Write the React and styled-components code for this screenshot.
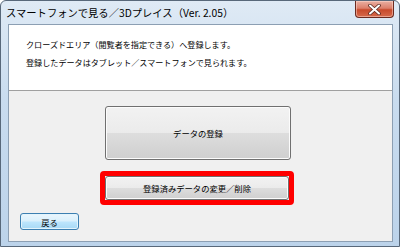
import React from 'react';
import styled, { createGlobalStyle } from 'styled-components';

const GlobalStyle = createGlobalStyle`
  html, body {
    margin: 0;
    padding: 0;
    background: #ffffff;
  }
  body {
    font-family: "Noto Sans CJK JP", "Noto Sans", sans-serif;
  }
`;

const Window = styled.div`
  width: 400px;
  height: 247px;
  box-sizing: border-box;
  display: flex;
  flex-direction: column;
  border: 1px solid #58687a;
  border-radius: 6px 6px 0 0;
  background: linear-gradient(180deg, #dfeaf5 0%, #c9dcef 40%, #bcd3ea 100%);
  overflow: hidden;
`;

const TitleBar = styled.div`
  height: 23px;
  display: flex;
  align-items: flex-start;
  padding-left: 5px;
`;

const Title = styled.span`
  font-size: 10.3px;
  line-height: 10px;
  margin-top: 7px;
  color: #000000;
  white-space: nowrap;
`;

const CloseButton = styled.div`
  margin-left: auto;
  margin-right: 5px;
  width: 39px;
  height: 17px;
  box-sizing: border-box;
  border: 1px solid #6b2a20;
  border-top: none;
  border-radius: 0 0 4px 4px;
  background: linear-gradient(180deg, #eab0a2 0%, #dc7f6b 45%, #c84a2c 55%, #d66a4c 100%);
  display: flex;
  align-items: center;
  justify-content: center;
  box-shadow: inset 0 0 0 1px rgba(255, 220, 210, 0.5);
`;

const Client = styled.div`
  flex: 1;
  margin: 0 6px 4px 7px;
  border: 1px solid #8c9fb3;
  background: #f0f0f0;
  display: flex;
  flex-direction: column;
`;

const MessagePane = styled.div`
  height: 66px;
  background: #ffffff;
  border-bottom: 1px solid #a0a0a0;
  padding: 11px 0 0 17px;
  box-sizing: border-box;
  display: flex;
  flex-direction: column;
`;

const MessageLine = styled.div`
  font-size: 8.1px;
  line-height: 18px;
  color: #000000;
  white-space: nowrap;
`;

const ButtonArea = styled.div`
  flex: 1;
  display: flex;
  flex-direction: column;
  align-items: flex-start;
  padding: 15px 0 0 96px;
`;

const Button = styled.div`
  width: ${(p) => p.$w}px;
  height: ${(p) => p.$h}px;
  box-sizing: border-box;
  border: 1px solid #707070;
  border-radius: 3px;
  background: linear-gradient(180deg, #f2f2f2 0%, #ebebeb 49%, #dddddd 51%, #cfcfcf 100%);
  box-shadow: inset 0 0 0 1px #fcfcfc;
  display: flex;
  align-items: center;
  justify-content: center;
  font-size: 8.3px;
  color: #000000;
  white-space: nowrap;
`;

const Highlight = styled.div`
  margin: 11px 0 0 -5px;
  border: 5px solid #ff0000;
  border-radius: 4px;
  display: flex;
`;

const Footer = styled.div`
  padding: 0 0 11px 11px;
`;

const BackButton = styled(Button)`
  border-color: #3c7fb1;
  background: linear-gradient(180deg, #eaf6fd 0%, #d9f0fc 49%, #bee6fd 51%, #a7d9f5 100%);
  box-shadow: inset 0 0 0 1px #e3f4fc;
`;

const CloseGlyph = () => (
  <svg width="13" height="11" viewBox="0 0 13 11">
    <path
      d="M2 1.5 L11 9.5 M11 1.5 L2 9.5"
      stroke="#5a2a22"
      strokeWidth="3.6"
      strokeLinecap="round"
    />
    <path
      d="M2 1.5 L11 9.5 M11 1.5 L2 9.5"
      stroke="#ffffff"
      strokeWidth="2"
      strokeLinecap="round"
    />
  </svg>
);

export default function App() {
  return (
    <>
      <GlobalStyle />
      <Window>
        <TitleBar>
          <Title>スマートフォンで見る／3Dプレイス（Ver. 2.05）</Title>
          <CloseButton>
            <CloseGlyph />
          </CloseButton>
        </TitleBar>
        <Client>
          <MessagePane>
            <MessageLine>クローズドエリア（閲覧者を指定できる）へ登録します。</MessageLine>
            <MessageLine>登録したデータはタブレット／スマートフォンで見られます。</MessageLine>
          </MessagePane>
          <ButtonArea>
            <Button $w={186} $h={54}>データの登録</Button>
            <Highlight>
              <Button $w={184} $h={24}>登録済みデータの変更／削除</Button>
            </Highlight>
          </ButtonArea>
          <Footer>
            <BackButton $w={59} $h={17}>戻る</BackButton>
          </Footer>
        </Client>
      </Window>
    </>
  );
}
